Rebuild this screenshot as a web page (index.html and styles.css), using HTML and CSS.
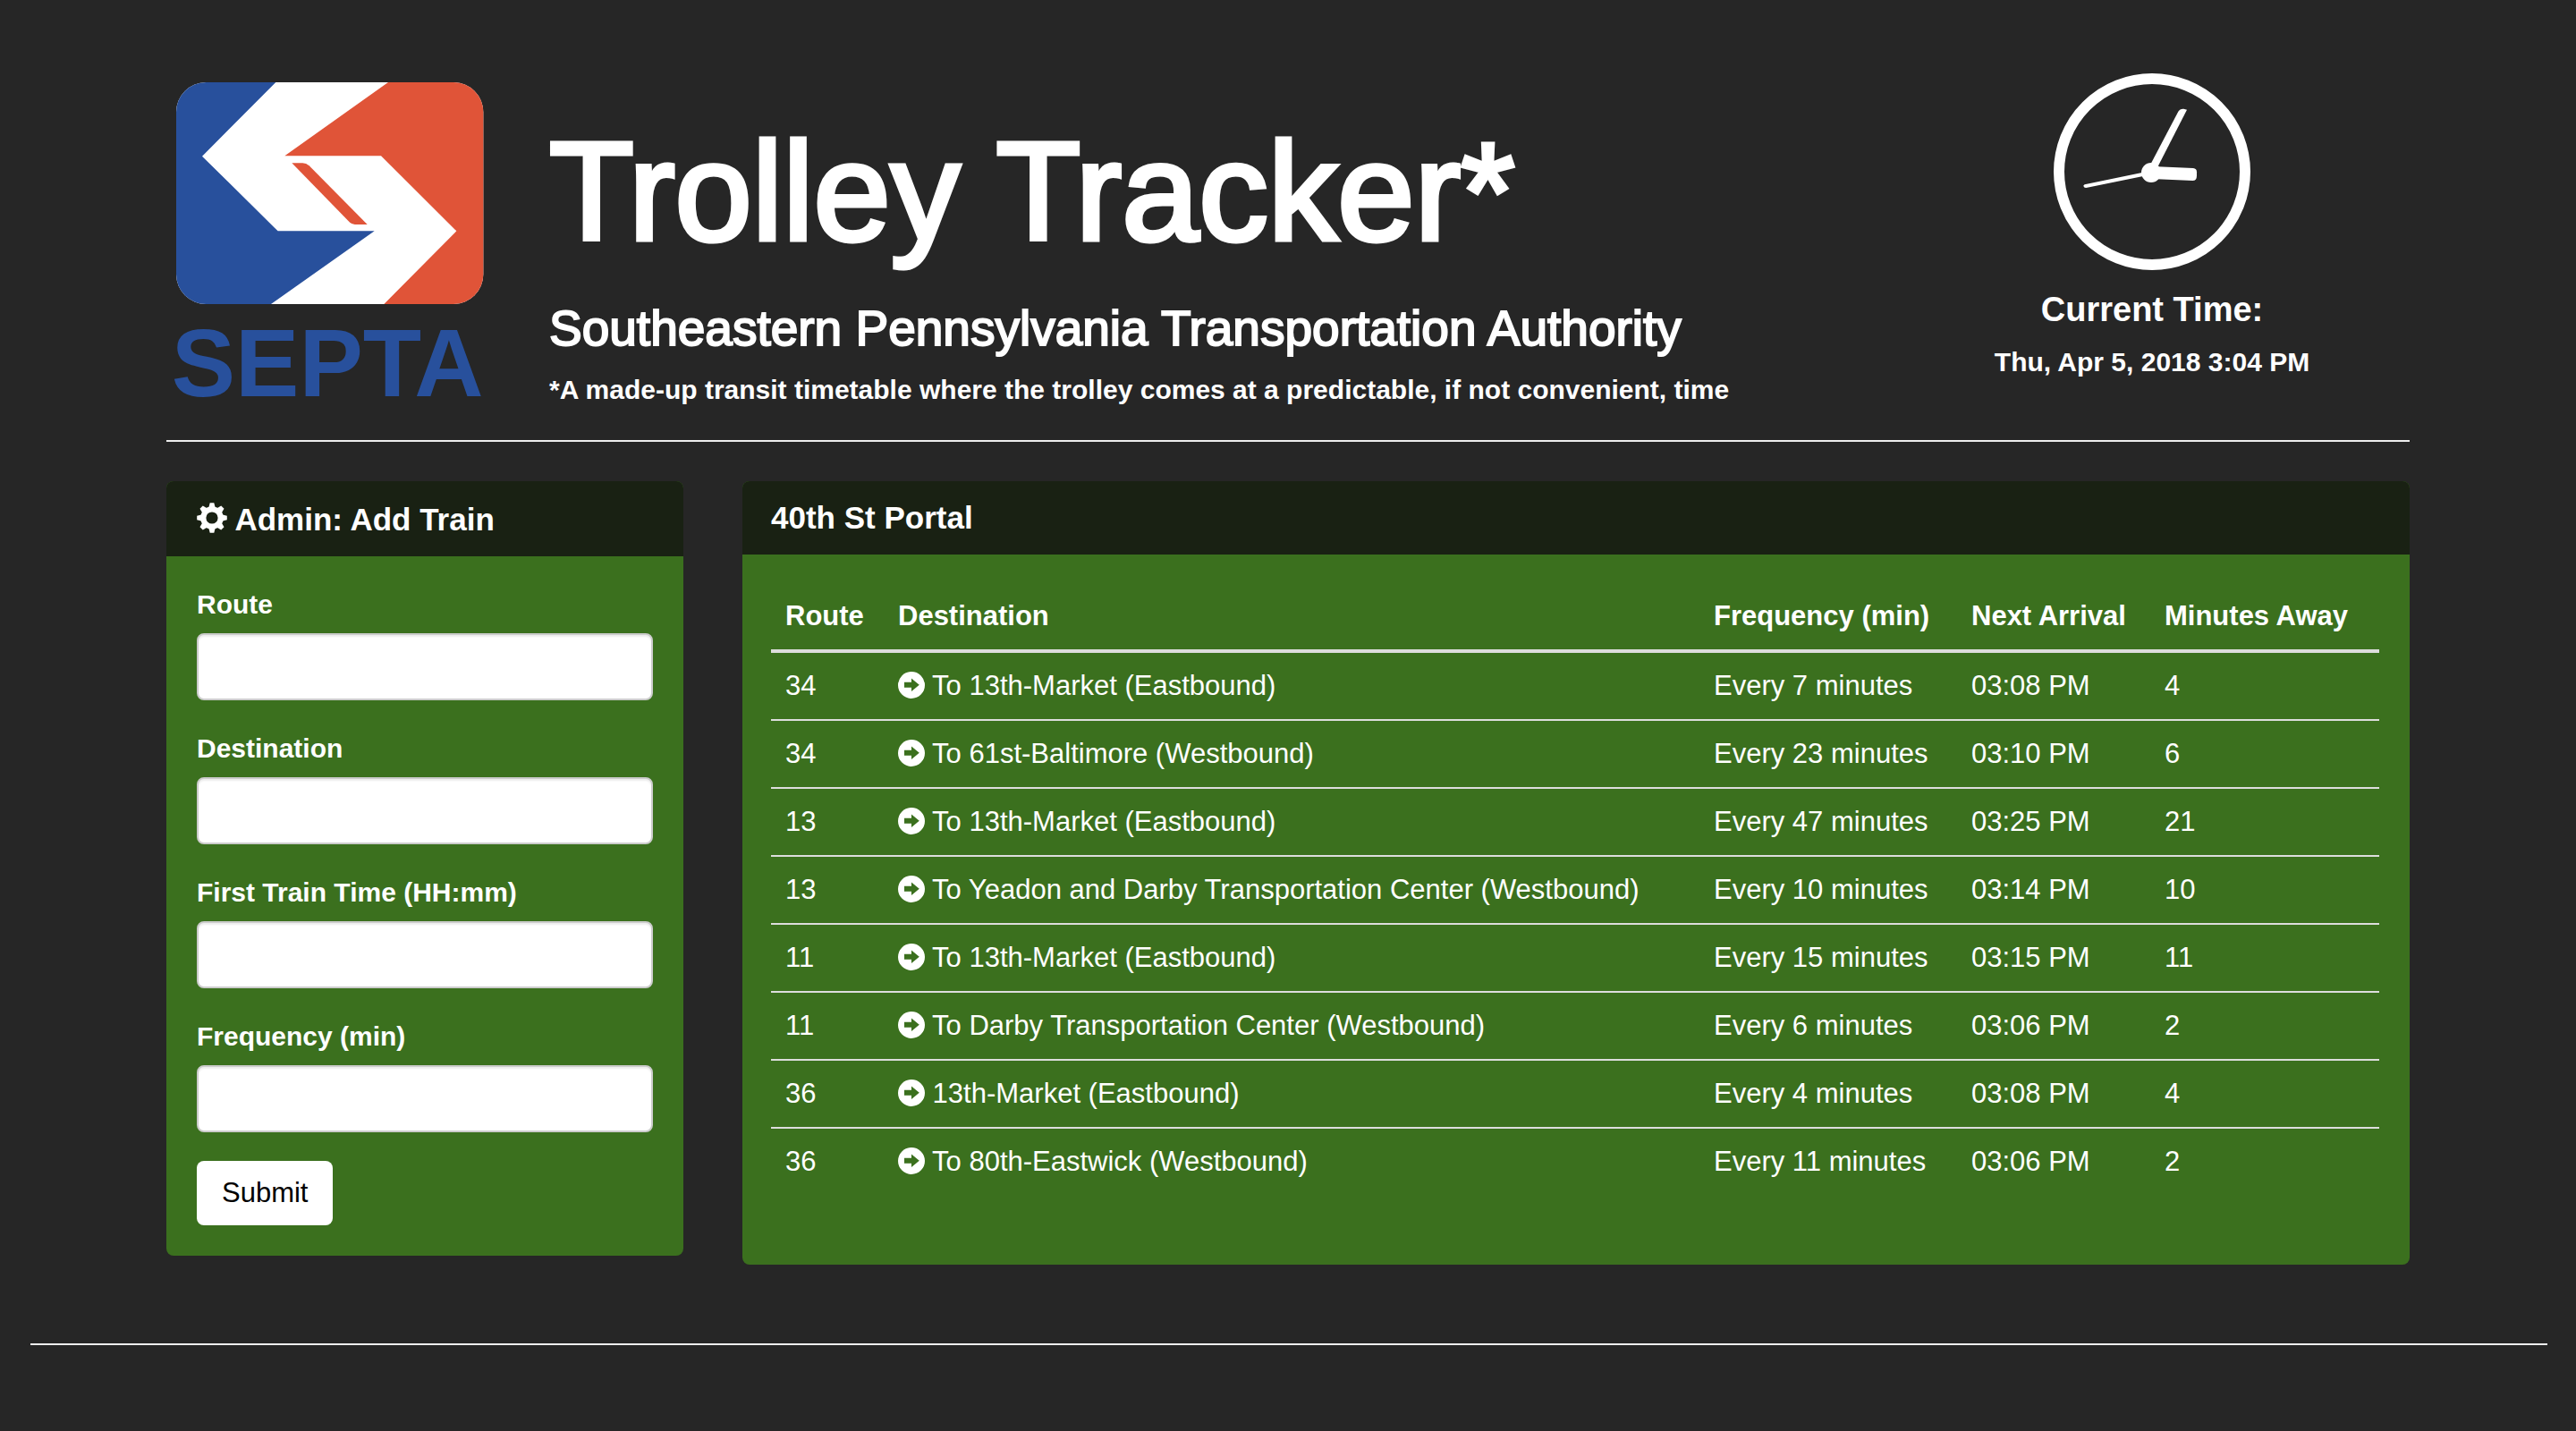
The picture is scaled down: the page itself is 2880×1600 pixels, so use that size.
FILE: index.html
```html
<!DOCTYPE html>
<html lang="en">
<head>
<meta charset="utf-8">
<title>Trolley Tracker</title>
<link rel="stylesheet" href="styles.css">
</head>
<body>
<svg class="sprite" aria-hidden="true">
  <symbol id="arrow" viewBox="0 0 30 30">
    <path fill="currentColor" fill-rule="evenodd" d="M15 0a15 15 0 1 0 0 30a15 15 0 1 0 0-30zM7 11.8h8V7.6l8.8 7.2-8.8 7.2v-4.2H7z"/>
  </symbol>
</svg>
<div class="container">
  <header class="masthead">
    <svg class="logo" viewBox="-12 0 1056 1080" role="img" aria-label="SEPTA">
      <defs><clipPath id="badge"><rect x="9" y="0" width="1030" height="744" rx="100"/></clipPath></defs>
      <g clip-path="url(#badge)">
        <rect width="1044" height="744" fill="#fff"/>
        <path fill="#28509c" d="M0 0H343L96 248L350 499H674L327 744H0z"/>
        <path fill="#e05438" d="M720 0H1044V744H706L949 499L696 247H373z"/>
        <path fill="#e05438" d="M397 271h36q12 0 22 9L650 477h-42q-10 0-18-8z"/>
      </g>
      <text class="logo-text" x="-7" y="1054">SEPTA</text>
    </svg>
    <div class="titles">
      <h1>Trolley Tracker*</h1>
      <h2>Southeastern Pennsylvania Transportation Authority</h2>
      <p>*A made-up transit timetable where the trolley comes at a predictable, if not convenient, time</p>
    </div>
    <div class="now">
      <svg class="clock" viewBox="0 0 660 660" role="img" aria-label="Clock">
        <circle cx="330" cy="330" r="312" fill="none" stroke="#fff" stroke-width="36"/>
        <g fill="#fff">
          <circle cx="327" cy="333" r="33"/>
          <path d="M330 312L468 318Q480 319 480 331V344Q480 360 466 360L330 354z"/>
          <path d="M325 305L418 128Q424 118 436 119L447 122L348 316z"/>
          <path d="M300 332L104 373Q98 375 101 380Q103 384 109 384L300 345z"/>
        </g>
      </svg>
      <h3>Current Time:</h3>
      <p>Thu, Apr 5, 2018 3:04 PM</p>
    </div>
  </header>
  <main class="panels">
    <section class="panel">
      <h3 class="panel-head panel-head-icon">
        <svg class="gear" viewBox="-17 -19 34 42" aria-hidden="true">
          <circle r="9.7" fill="none" stroke="currentColor" stroke-width="6.2"/>
          <g fill="currentColor">
            <path id="tooth" d="M-3.8-11L-2.3-16.8H2.3L3.8-11z"/>
            <use href="#tooth" transform="rotate(45)"/>
            <use href="#tooth" transform="rotate(90)"/>
            <use href="#tooth" transform="rotate(135)"/>
            <use href="#tooth" transform="rotate(180)"/>
            <use href="#tooth" transform="rotate(225)"/>
            <use href="#tooth" transform="rotate(270)"/>
            <use href="#tooth" transform="rotate(315)"/>
          </g>
        </svg>
        Admin: Add Train
      </h3>
      <form class="panel-body">
        <label for="route">Route</label>
        <input id="route" type="text">
        <label for="destination">Destination</label>
        <input id="destination" type="text">
        <label for="first">First Train Time (HH:mm)</label>
        <input id="first" type="text">
        <label for="frequency">Frequency (min)</label>
        <input id="frequency" type="text">
        <button type="button">Submit</button>
      </form>
    </section>
    <section class="panel">
      <h3 class="panel-head">40th St Portal</h3>
      <div class="panel-body panel-body-table">
        <table>
          <colgroup><col class="c-route"><col><col class="c-freq"><col class="c-next"><col class="c-away"></colgroup>
          <thead>
            <tr><th>Route</th><th>Destination</th><th>Frequency (min)</th><th>Next Arrival</th><th>Minutes Away</th></tr>
          </thead>
          <tbody>
            <tr><td>34</td><td><svg class="arrow"><use href="#arrow"/></svg> To 13th-Market (Eastbound)</td><td>Every 7 minutes</td><td>03:08 PM</td><td>4</td></tr>
            <tr><td>34</td><td><svg class="arrow"><use href="#arrow"/></svg> To 61st-Baltimore (Westbound)</td><td>Every 23 minutes</td><td>03:10 PM</td><td>6</td></tr>
            <tr><td>13</td><td><svg class="arrow"><use href="#arrow"/></svg> To 13th-Market (Eastbound)</td><td>Every 47 minutes</td><td>03:25 PM</td><td>21</td></tr>
            <tr><td>13</td><td><svg class="arrow"><use href="#arrow"/></svg> To Yeadon and Darby Transportation Center (Westbound)</td><td>Every 10 minutes</td><td>03:14 PM</td><td>10</td></tr>
            <tr><td>11</td><td><svg class="arrow"><use href="#arrow"/></svg> To 13th-Market (Eastbound)</td><td>Every 15 minutes</td><td>03:15 PM</td><td>11</td></tr>
            <tr><td>11</td><td><svg class="arrow"><use href="#arrow"/></svg> To Darby Transportation Center (Westbound)</td><td>Every 6 minutes</td><td>03:06 PM</td><td>2</td></tr>
            <tr><td>36</td><td><svg class="arrow"><use href="#arrow"/></svg> 13th-Market (Eastbound)</td><td>Every 4 minutes</td><td>03:08 PM</td><td>4</td></tr>
            <tr><td>36</td><td><svg class="arrow"><use href="#arrow"/></svg> To 80th-Eastwick (Westbound)</td><td>Every 11 minutes</td><td>03:06 PM</td><td>2</td></tr>
          </tbody>
        </table>
      </div>
    </section>
  </main>
</div>
<hr class="page-end">
</body>
</html>
```
FILE: styles.css
```css
* { box-sizing: border-box; }

body {
  margin: 0;
  background: #262626;
  color: #fff;
  font: 31px/42px "Liberation Sans", Arial, sans-serif;
}

h1, h2, h3, p { margin: 0; }

.sprite { display: none; }

.container { padding: 0 186px; }

.masthead {
  display: grid;
  grid-template-columns: 428px 1fr 576px;
  align-items: start;
  padding: 82px 0 35px;
  border-bottom: 2px solid #eee;
}

.logo {
  width: 352px;
  height: 360px;
  margin: 10px 0 0 4px;
  overflow: visible;
}

.logo-text { fill: #28509c; font-size: 321px; font-weight: 700; }

h1 {
  margin-top: 48px;
  font-size: 155px;
  font-weight: 400;
  line-height: 170px;
  -webkit-text-stroke: 5px #fff;
}

h2 {
  margin-top: 37px;
  font-size: 55px;
  font-weight: 400;
  line-height: 60px;
  -webkit-text-stroke: 2px #fff;
}

.masthead p { font-size: 30px; font-weight: 700; }

.titles p { margin-top: 18px; }

.now { text-align: center; }

.clock { display: block; width: 220px; height: 220px; margin: 0 auto; }

.now h3 { margin: 22px 0 16px; font-size: 38px; line-height: 44px; }

.panels {
  display: grid;
  grid-template-columns: 578px 1fr;
  align-items: start;
  gap: 66px;
  margin-top: 44px;
}

.panel { overflow: hidden; border-radius: 8px; background: #3b701e; }

.panel-head {
  padding: 20px 32px;
  background: #192113;
  font-size: 35px;
  line-height: 42px;
}

.panel-head-icon { padding: 22px 34px 20px; }

.gear { width: 34px; height: 42px; vertical-align: top; }

.panel-body { padding: 32px 34px 34px; }

.panel-body-table { padding: 32px 34px 78px 32px; }

label { display: block; margin-bottom: 10px; font-size: 30px; font-weight: 700; line-height: 44px; }

input {
  display: block;
  width: 100%;
  height: 75px;
  margin-bottom: 32px;
  padding: 12px 24px;
  border: 2px solid #ccc;
  border-radius: 8px;
  background: #fff;
  font: inherit;
  box-shadow: inset 0 2px 2px rgba(0, 0, 0, 0.075);
}

button {
  display: block;
  height: 72px;
  padding: 0 28px;
  border: 0;
  border-radius: 8px;
  background: #fff;
  color: #000;
  font: inherit;
}

table { width: 100%; table-layout: fixed; border-collapse: collapse; }

.c-route { width: 126px; }
.c-freq { width: 288px; }
.c-next { width: 216px; }
.c-away { width: 256px; }

th, td { padding: 16px; text-align: left; white-space: nowrap; }

th { border-bottom: 4px solid #ddd; }

td { border-top: 2px solid #ddd; }

.arrow { width: 30px; height: 30px; vertical-align: -4px; }

.page-end { margin: 88px 32px 98px 34px; border: 0; border-top: 2px solid #eee; }
```
